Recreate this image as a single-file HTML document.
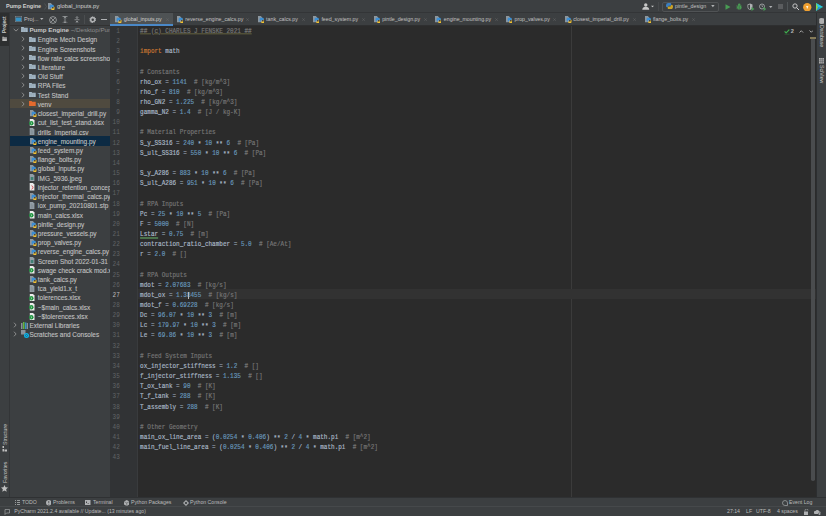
<!DOCTYPE html><html><head><meta charset="utf-8"><style>
*{margin:0;padding:0;box-sizing:border-box}
html,body{width:826px;height:516px;overflow:hidden;background:#3c3f41;font-family:"Liberation Sans",sans-serif;color:#bbbbbb}
.a{position:absolute}
.ic{position:absolute;display:block}
.t{position:absolute;white-space:pre;line-height:1}
.code{position:absolute;font-family:"Liberation Mono",monospace;font-size:6px;white-space:pre;color:#a9b7c6;transform:scaleY(1.2);-webkit-text-stroke:0.15px currentColor}
.ln{position:absolute;font-family:"Liberation Mono",monospace;font-size:6px;white-space:pre;color:#606366;text-align:right;transform:scaleY(1.2)}
.st{position:relative;top:0.9px} .k{color:#cc7832} .n{color:#6897bb} .c{color:#767676}
</style></head><body>
<div class="a" style="left:0;top:0;width:826px;height:13px;background:#3c3f41;border-bottom:0.8px solid #333537"></div>
<div class="t" style="left:6px;top:4.2px;font-size:5.5px;font-weight:bold;color:#d0d0d0">Pump Engine</div>
<svg class="ic" style="left:43.5px;top:3px" width="3" height="7" viewBox="0 0 3 7"><path d="M0.5 0.5L2.5 3.5 0.5 6.5" stroke="#5e6060" stroke-width="0.6" fill="none"/></svg>
<svg class="ic" style="left:48.3px;top:2.6px" width="6.5" height="7.2" viewBox="0 0 13 14.4"><path d="M0 0h5.5l2.7 2.7V12.4H0z" fill="#9aa7b0" opacity="0.85"/>
<path d="M6 3.6h3.6a2 2 0 0 1 2 2V8.2H7.6a2 2 0 0 0-2 2v.6H5a1.7 1.7 0 0 1-1.7-1.7V6A2.4 2.4 0 0 1 6 3.6z" fill="#3b8ed4"/>
<path d="M11.2 7h.2A1.6 1.6 0 0 1 13 8.6v3.4a2.4 2.4 0 0 1-2.4 2.4H8.6a2 2 0 0 1-2-2v-1.2h4a.6.6 0 0 0 .6-.6z" fill="#f2c230"/>
</svg>
<div class="t" style="left:57px;top:4px;font-size:5.85px;color:#d0d0d0">global_inputs.py</div>
<svg class="ic" style="left:641.6px;top:2.8px" width="12.5" height="7" viewBox="0 0 25 14">
<circle cx="7.5" cy="4" r="3.4" fill="#c8c8c8"/><path d="M0.5 13.5c0-4 3-6 7-6s7 2 7 6z" fill="#c8c8c8"/>
<path d="M18 5.5h6l-3 3z" fill="#c8c8c8"/></svg>
<div class="a" style="left:657.5px;top:2px;width:0.6px;height:9px;background:#46494b"></div>
<div class="a" style="left:662px;top:1.5px;width:57px;height:10px;border:0.8px solid #505355;border-radius:2px;background:#3c3f41"></div>
<svg class="ic" style="left:666px;top:3.2px" width="7" height="6.2" viewBox="0 0 14 12.4"><path d="M4.5 0h4a2 2 0 0 1 2 2v3.6H6a2 2 0 0 0-2 2v1H2.2A2.2 2.2 0 0 1 0 6.4V4.5A4.5 4.5 0 0 1 4.5 0z" fill="#3b7fc0"/><path d="M11.8 3.8A2.2 2.2 0 0 1 14 6v1.9a4.5 4.5 0 0 1-4.5 4.5h-4a2 2 0 0 1-2-2V6.8H8a2 2 0 0 0 2-2v-1z" fill="#c9a227"/></svg>
<div class="t" style="left:675px;top:4px;font-size:5.3px;color:#c2c2c2">pintle_design</div>
<svg class="ic" style="left:710.8px;top:5.4px" width="3.8" height="2.6" viewBox="0 0 4 3"><path d="M0 0h4L2 2.5z" fill="#afb1b3"/></svg>
<svg class="ic" style="left:724.5px;top:3.5px" width="6" height="6" viewBox="0 0 6 6"><path d="M0.5 0.2L5.5 3 0.5 5.8z" fill="#499c54"/></svg>
<svg class="ic" style="left:735.8px;top:2.8px" width="6.5" height="7" viewBox="0 0 13 14">
<ellipse cx="6.5" cy="8.5" rx="4.3" ry="5" fill="#499c54"/><ellipse cx="6.5" cy="3" rx="2.5" ry="2" fill="#499c54"/>
<path d="M0.5 6h2M10.5 6h2M0.5 10h2M10.5 10h2" stroke="#499c54" stroke-width="1.4"/><path d="M6.5 5v9" stroke="#3c3f41" stroke-width="0.8"/></svg>
<svg class="ic" style="left:747px;top:2.5px" width="7.5" height="8" viewBox="0 0 15 16">
<path d="M6 1l5 2v5c0 3-2.5 5-5 6-2.5-1-5-3-5-6V3z" fill="#afb1b3"/>
<path d="M6 3v10c-2-1-3.5-2.5-3.5-5V4z" fill="#3c3f41"/>
<path d="M9 8l6 4-6 4z" fill="#499c54"/></svg>
<svg class="ic" style="left:758.5px;top:2.5px" width="7.5" height="8" viewBox="0 0 15 16">
<circle cx="6" cy="7" r="5" fill="none" stroke="#afb1b3" stroke-width="1.6"/><path d="M6 4v3h2" stroke="#afb1b3" stroke-width="1.3" fill="none"/>
<path d="M9 8l6 4-6 4z" fill="#499c54"/></svg>
<svg class="ic" style="left:769.3px;top:5.5px" width="3.5" height="2.5" viewBox="0 0 4 3"><path d="M0 0h4L2 2.5z" fill="#afb1b3"/></svg>
<div class="a" style="left:777.5px;top:4px;width:5px;height:5px;background:#5b5d5f"></div>
<div class="a" style="left:787px;top:2px;width:0.6px;height:9px;background:#515658"></div>
<svg class="ic" style="left:791.5px;top:2.8px" width="7.5" height="7.5" viewBox="0 0 15 15">
<circle cx="6" cy="6" r="4.3" fill="none" stroke="#d0d0d0" stroke-width="1.8"/><path d="M9.2 9.2L14 14" stroke="#d0d0d0" stroke-width="2"/></svg>
<svg class="ic" style="left:803px;top:2.5px" width="8.5" height="8.5" viewBox="0 0 17 17">
<circle cx="8.5" cy="8.5" r="8.3" fill="#f0a030"/><path d="M6 6h5l-2.5 4z" fill="#fff6e0"/><rect x="7.5" y="6" width="2" height="5" fill="#fff6e0"/></svg>
<svg class="ic" style="left:815.6px;top:2.6px" width="7.2" height="8" viewBox="0 0 14.4 16">
<path d="M0 0l14.4 8L0 16z" fill="#22c3a0"/><path d="M0 0l14.4 8L4 9z" fill="#2bc2e8"/><path d="M0 6l9 4L0 16z" fill="#1f8adf"/><path d="M0 0L4 9 0 16z" fill="#8bd84a"/></svg>
<div class="a" style="left:0;top:13px;width:10px;height:484px;background:#3c3f41;border-right:0.9px solid #333537"></div>
<div class="a" style="left:0;top:13px;width:9.2px;height:32.8px;background:#2d2f30"></div>
<div class="t" style="left:2.5px;top:33.4px;font-size:4.9px;font-weight:bold;color:#d0d0d0;transform-origin:0 0;transform:rotate(-90deg)">Project</div>
<svg class="ic" style="left:2.2px;top:35.5px" width="5.2" height="5" viewBox="0 0 11 12"><path d="M0 2h4l1 1h6v9H0z" fill="#bdbdbd"/><path d="M0 5h11" stroke="#2d2f30" stroke-width="1"/></svg>
<div class="t" style="left:4.6px;top:423px;font-size:5.2px;color:#c4c4c4;transform-origin:0 0;transform:translate(-1.8px,22px) rotate(-90deg)">Structure</div>
<svg class="ic" style="left:2.3px;top:445.5px" width="5" height="6" viewBox="0 0 10 12"><rect x="1" y="0" width="3" height="4" fill="#c0c0c0"/><rect x="1" y="6" width="3" height="5" fill="#c0c0c0"/><rect x="5" y="7" width="5" height="4" fill="#c0c0c0"/></svg>
<div class="t" style="left:4.6px;top:462px;font-size:5.2px;color:#c4c4c4;transform-origin:0 0;transform:translate(-1.8px,21px) rotate(-90deg)">Favorites</div>
<svg class="ic" style="left:1.3px;top:485px" width="7" height="7" viewBox="0 0 14 14"><path d="M7 0l2.1 4.6 5 .5-3.8 3.3 1.1 5L7 10.8 2.6 13.4l1.1-5L-.1 5.1l5-.5z" fill="#c0c0c0"/></svg>
<div class="a" style="left:816.4px;top:13px;width:9.6px;height:484px;background:#3c3f41;border-left:1px solid #2c2e30"></div>
<svg class="ic" style="left:818.5px;top:17.5px" width="5.5" height="6" viewBox="0 0 11 12"><ellipse cx="5.5" cy="2" rx="5" ry="2" fill="#b0b0b0"/><rect x="0.5" y="2" width="10" height="8" fill="#b0b0b0"/><ellipse cx="5.5" cy="10" rx="5" ry="2" fill="#b0b0b0"/></svg>
<div class="t" style="left:821.3px;top:24.5px;font-size:5.2px;color:#c4c4c4;transform-origin:0 0;transform:translate(2.9px,0) rotate(90deg)">Database</div>
<svg class="ic" style="left:818.5px;top:58px" width="5.5" height="5.5" viewBox="0 0 11 11"><path d="M0 0h11v11H0z" fill="#b0b0b0"/><path d="M0 3.7h11M0 7.3h11M3.7 0v11M7.3 0v11" stroke="#3c3f41" stroke-width="0.8"/></svg>
<div class="t" style="left:821.3px;top:65px;font-size:5.2px;color:#c4c4c4;transform-origin:0 0;transform:translate(2.9px,0) rotate(90deg)">SciView</div>
<div class="a" style="left:10px;top:13px;width:100px;height:484px;background:#3c3f41;overflow:hidden">
<svg class="ic" style="left:5px;top:3px" width="7" height="6" viewBox="0 0 14 12"><rect x="0.5" y="0.5" width="13" height="11" fill="none" stroke="#8a9199" stroke-width="1"/><rect x="1.5" y="3" width="11" height="7.5" fill="#3592c4"/></svg>
<div class="t" style="left:14px;top:4px;font-size:5.6px;color:#c2c2c2">Proj...</div>
<svg class="ic" style="left:30.3px;top:5.2px" width="3.5" height="2.5" viewBox="0 0 4 3"><path d="M0 0h4L2 2.5z" fill="#afb1b3"/></svg>
<svg class="ic" style="left:38.8px;top:2.6px" width="8" height="8" viewBox="0 0 16 16"><circle cx="8" cy="8" r="6.8" fill="none" stroke="#afb1b3" stroke-width="1.5"/><path d="M3.3 3.3l9.4 9.4M12.7 3.3l-9.4 9.4" stroke="#afb1b3" stroke-width="1.4"/></svg>
<svg class="ic" style="left:51.5px;top:2.5px" width="6" height="7.5" viewBox="0 0 12 15"><path d="M1 1h10M1 14h10M6 1v13M3.5 4L6 1.8 8.5 4M3.5 11L6 13.2 8.5 11" stroke="#afb1b3" stroke-width="1.3" fill="none"/></svg>
<svg class="ic" style="left:63.5px;top:2.5px" width="6" height="7.5" viewBox="0 0 12 15"><path d="M1 7.5h10M6 0v5M6 10v5M3.5 2.5L6 5 8.5 2.5M3.5 12.5L6 10 8.5 12.5" stroke="#afb1b3" stroke-width="1.3" fill="none"/></svg>
<div class="a" style="left:74.3px;top:2px;width:0.6px;height:9px;background:#4a4d4f"></div>
<svg class="ic" style="left:78.5px;top:2.5px" width="7.5" height="7.5" viewBox="0 0 16 16"><path d="M8 0l1.6 2.2 2.6-.8.4 2.7 2.6 1-1.2 2.4 1.2 2.4-2.6 1-.4 2.7-2.6-.8L8 16l-1.6-2.2-2.6.8-.4-2.7-2.6-1 1.2-2.4L.8 5.1l2.6-1 .4-2.7 2.6.8z" fill="#afb1b3"/><circle cx="8" cy="8" r="2.6" fill="#3c3f41"/></svg>
<div class="a" style="left:91px;top:6px;width:6px;height:1px;background:#afb1b3"></div>
<div class="a" style="left:0;top:12.2px;width:100px;height:0.7px;background:#323232"></div>
<svg class="ic" style="left:3px;top:15.009999999999998px" width="6" height="4" viewBox="0 0 6 4"><path d="M0.7 0.9L3 3.1 5.3 0.9" stroke="#9a9a9a" stroke-width="0.85" fill="none"/></svg>
<svg class="ic" style="left:10.9px;top:14.409999999999998px" width="6.8" height="5" viewBox="0 0 16 12">
<path d="M0 0h6l1.5 2H16v10H0z" fill="#a5b8c7"/><path d="M0 4.5h16M5 4.5v7.5M10 4.5v7.5" stroke="#3c3f41" stroke-width="0.6" opacity="0.5"/>
</svg>
<div class="t" style="left:19.4px;top:13.71px;font-size:6.2px;font-weight:bold;color:#c8c8c8;margin-top:0.7px">Pump Engine <span style="font-weight:normal;color:#8c8c8c">~/Desktop/Pump Engine</span></div>
<svg class="ic" style="left:11.299999999999999px;top:23.229999999999997px" width="4" height="6" viewBox="0 0 4 6"><path d="M1 0.7L3.1 3 1 5.3" stroke="#9a9a9a" stroke-width="0.85" fill="none"/></svg>
<svg class="ic" style="left:19.4px;top:23.629999999999995px" width="6.8" height="5" viewBox="0 0 16 12">
<path d="M0 0h6l1.5 2H16v10H0z" fill="#a5b8c7"/><path d="M0 4.5h16M5 4.5v7.5M10 4.5v7.5" stroke="#3c3f41" stroke-width="0.6" opacity="0.5"/>
</svg>
<div class="t" style="left:27.8px;top:24.33px;font-size:6.45px;color:#c2c2c2;-webkit-text-stroke:0.1px #c2c2c2">Engine Mech Design</div>
<svg class="ic" style="left:11.299999999999999px;top:32.45px" width="4" height="6" viewBox="0 0 4 6"><path d="M1 0.7L3.1 3 1 5.3" stroke="#9a9a9a" stroke-width="0.85" fill="none"/></svg>
<svg class="ic" style="left:19.4px;top:32.85px" width="6.8" height="5" viewBox="0 0 16 12">
<path d="M0 0h6l1.5 2H16v10H0z" fill="#a5b8c7"/><path d="M0 4.5h16M5 4.5v7.5M10 4.5v7.5" stroke="#3c3f41" stroke-width="0.6" opacity="0.5"/>
</svg>
<div class="t" style="left:27.8px;top:33.55px;font-size:6.45px;color:#c2c2c2;-webkit-text-stroke:0.1px #c2c2c2">Engine Screenshots</div>
<svg class="ic" style="left:11.299999999999999px;top:41.67px" width="4" height="6" viewBox="0 0 4 6"><path d="M1 0.7L3.1 3 1 5.3" stroke="#9a9a9a" stroke-width="0.85" fill="none"/></svg>
<svg class="ic" style="left:19.4px;top:42.07px" width="6.8" height="5" viewBox="0 0 16 12">
<path d="M0 0h6l1.5 2H16v10H0z" fill="#a5b8c7"/><path d="M0 4.5h16M5 4.5v7.5M10 4.5v7.5" stroke="#3c3f41" stroke-width="0.6" opacity="0.5"/>
</svg>
<div class="t" style="left:27.8px;top:42.77px;font-size:6.45px;color:#c2c2c2;-webkit-text-stroke:0.1px #c2c2c2">flow rate calcs screenshots</div>
<svg class="ic" style="left:11.299999999999999px;top:50.89px" width="4" height="6" viewBox="0 0 4 6"><path d="M1 0.7L3.1 3 1 5.3" stroke="#9a9a9a" stroke-width="0.85" fill="none"/></svg>
<svg class="ic" style="left:19.4px;top:51.29px" width="6.8" height="5" viewBox="0 0 16 12">
<path d="M0 0h6l1.5 2H16v10H0z" fill="#a5b8c7"/><path d="M0 4.5h16M5 4.5v7.5M10 4.5v7.5" stroke="#3c3f41" stroke-width="0.6" opacity="0.5"/>
</svg>
<div class="t" style="left:27.8px;top:51.99px;font-size:6.45px;color:#c2c2c2;-webkit-text-stroke:0.1px #c2c2c2">Literature</div>
<svg class="ic" style="left:11.299999999999999px;top:60.11px" width="4" height="6" viewBox="0 0 4 6"><path d="M1 0.7L3.1 3 1 5.3" stroke="#9a9a9a" stroke-width="0.85" fill="none"/></svg>
<svg class="ic" style="left:19.4px;top:60.51px" width="6.8" height="5" viewBox="0 0 16 12">
<path d="M0 0h6l1.5 2H16v10H0z" fill="#a5b8c7"/><path d="M0 4.5h16M5 4.5v7.5M10 4.5v7.5" stroke="#3c3f41" stroke-width="0.6" opacity="0.5"/>
</svg>
<div class="t" style="left:27.8px;top:61.21px;font-size:6.45px;color:#c2c2c2;-webkit-text-stroke:0.1px #c2c2c2">Old Stuff</div>
<svg class="ic" style="left:11.299999999999999px;top:69.33px" width="4" height="6" viewBox="0 0 4 6"><path d="M1 0.7L3.1 3 1 5.3" stroke="#9a9a9a" stroke-width="0.85" fill="none"/></svg>
<svg class="ic" style="left:19.4px;top:69.73px" width="6.8" height="5" viewBox="0 0 16 12">
<path d="M0 0h6l1.5 2H16v10H0z" fill="#a5b8c7"/><path d="M0 4.5h16M5 4.5v7.5M10 4.5v7.5" stroke="#3c3f41" stroke-width="0.6" opacity="0.5"/>
</svg>
<div class="t" style="left:27.8px;top:70.43px;font-size:6.45px;color:#c2c2c2;-webkit-text-stroke:0.1px #c2c2c2">RPA Files</div>
<svg class="ic" style="left:11.299999999999999px;top:78.55px" width="4" height="6" viewBox="0 0 4 6"><path d="M1 0.7L3.1 3 1 5.3" stroke="#9a9a9a" stroke-width="0.85" fill="none"/></svg>
<svg class="ic" style="left:19.4px;top:78.95px" width="6.8" height="5" viewBox="0 0 16 12">
<path d="M0 0h6l1.5 2H16v10H0z" fill="#a5b8c7"/><path d="M0 4.5h16M5 4.5v7.5M10 4.5v7.5" stroke="#3c3f41" stroke-width="0.6" opacity="0.5"/>
</svg>
<div class="t" style="left:27.8px;top:79.65px;font-size:6.45px;color:#c2c2c2;-webkit-text-stroke:0.1px #c2c2c2">Test Stand</div>
<div class="a" style="left:0;top:86.16px;width:100px;height:9.22px;background:#4f4a3f"></div>
<svg class="ic" style="left:11.299999999999999px;top:87.77px" width="4" height="6" viewBox="0 0 4 6"><path d="M1 0.7L3.1 3 1 5.3" stroke="#9a9a9a" stroke-width="0.85" fill="none"/></svg>
<svg class="ic" style="left:19.4px;top:88.17px" width="6.8" height="5" viewBox="0 0 16 12">
<path d="M0 0h6l1.5 2H16v10H0z" fill="#e36a2e"/><path d="M0 4.5h16M5 4.5v7.5M10 4.5v7.5" stroke="#3c3f41" stroke-width="0.6" opacity="0"/>
</svg>
<div class="t" style="left:27.8px;top:88.87px;font-size:6.45px;color:#c2c2c2;-webkit-text-stroke:0.1px #c2c2c2">venv</div>
<svg class="ic" style="left:20.2px;top:96.89px" width="6.5" height="7.2" viewBox="0 0 13 14.4"><path d="M0 0h5.5l2.7 2.7V12.4H0z" fill="#9aa7b0" opacity="0.85"/>
<path d="M6 3.6h3.6a2 2 0 0 1 2 2V8.2H7.6a2 2 0 0 0-2 2v.6H5a1.7 1.7 0 0 1-1.7-1.7V6A2.4 2.4 0 0 1 6 3.6z" fill="#3b8ed4"/>
<path d="M11.2 7h.2A1.6 1.6 0 0 1 13 8.6v3.4a2.4 2.4 0 0 1-2.4 2.4H8.6a2 2 0 0 1-2-2v-1.2h4a.6.6 0 0 0 .6-.6z" fill="#f2c230"/>
</svg>
<div class="t" style="left:27.8px;top:98.09px;font-size:6.45px;color:#c2c2c2;-webkit-text-stroke:0.1px #c2c2c2">closest_imperial_drill.py</div>
<svg class="ic" style="left:18.8px;top:105.91px" width="6" height="7.4" viewBox="0 0 12 14.8">
<path d="M1.6 0h6.4l3 3V14.8H1.6z" fill="#ececec"/>
<circle cx="4.6" cy="8.6" r="4.4" fill="#1f9440"/>
<path d="M3.4 6.6l2.6 2-2.6 2" stroke="#e8f5e8" stroke-width="1" fill="none"/>
</svg>
<div class="t" style="left:27.8px;top:107.31px;font-size:6.45px;color:#c2c2c2;-webkit-text-stroke:0.1px #c2c2c2">cut_list_test_stand.xlsx</div>
<svg class="ic" style="left:19.4px;top:114.83px" width="6" height="7.4" viewBox="0 0 12 14.8">
<path d="M1.4 0h6.4l3 3V14.8H1.4z" fill="#a3b0ba" opacity="0.85"/>
<path d="M4.6 3v10M7.6 5v8" stroke="#6e7a82" stroke-width="0.8"/>
</svg>
<div class="t" style="left:27.8px;top:116.53px;font-size:6.45px;color:#c2c2c2;-webkit-text-stroke:0.1px #c2c2c2">drills_imperial.csv</div>
<div class="a" style="left:0;top:122.94px;width:100px;height:9.8px;background:#0c2a43"></div>
<svg class="ic" style="left:20.2px;top:124.55000000000003px" width="6.5" height="7.2" viewBox="0 0 13 14.4"><path d="M0 0h5.5l2.7 2.7V12.4H0z" fill="#9aa7b0" opacity="0.85"/>
<path d="M6 3.6h3.6a2 2 0 0 1 2 2V8.2H7.6a2 2 0 0 0-2 2v.6H5a1.7 1.7 0 0 1-1.7-1.7V6A2.4 2.4 0 0 1 6 3.6z" fill="#3b8ed4"/>
<path d="M11.2 7h.2A1.6 1.6 0 0 1 13 8.6v3.4a2.4 2.4 0 0 1-2.4 2.4H8.6a2 2 0 0 1-2-2v-1.2h4a.6.6 0 0 0 .6-.6z" fill="#f2c230"/>
</svg>
<div class="t" style="left:27.8px;top:125.75px;font-size:6.45px;color:#c2c2c2;-webkit-text-stroke:0.1px #c2c2c2">engine_mounting.py</div>
<svg class="ic" style="left:20.2px;top:133.77000000000004px" width="6.5" height="7.2" viewBox="0 0 13 14.4"><path d="M0 0h5.5l2.7 2.7V12.4H0z" fill="#9aa7b0" opacity="0.85"/>
<path d="M6 3.6h3.6a2 2 0 0 1 2 2V8.2H7.6a2 2 0 0 0-2 2v.6H5a1.7 1.7 0 0 1-1.7-1.7V6A2.4 2.4 0 0 1 6 3.6z" fill="#3b8ed4"/>
<path d="M11.2 7h.2A1.6 1.6 0 0 1 13 8.6v3.4a2.4 2.4 0 0 1-2.4 2.4H8.6a2 2 0 0 1-2-2v-1.2h4a.6.6 0 0 0 .6-.6z" fill="#f2c230"/>
</svg>
<div class="t" style="left:27.8px;top:134.97px;font-size:6.45px;color:#c2c2c2;-webkit-text-stroke:0.1px #c2c2c2">feed_system.py</div>
<svg class="ic" style="left:20.2px;top:142.99000000000004px" width="6.5" height="7.2" viewBox="0 0 13 14.4"><path d="M0 0h5.5l2.7 2.7V12.4H0z" fill="#9aa7b0" opacity="0.85"/>
<path d="M6 3.6h3.6a2 2 0 0 1 2 2V8.2H7.6a2 2 0 0 0-2 2v.6H5a1.7 1.7 0 0 1-1.7-1.7V6A2.4 2.4 0 0 1 6 3.6z" fill="#3b8ed4"/>
<path d="M11.2 7h.2A1.6 1.6 0 0 1 13 8.6v3.4a2.4 2.4 0 0 1-2.4 2.4H8.6a2 2 0 0 1-2-2v-1.2h4a.6.6 0 0 0 .6-.6z" fill="#f2c230"/>
</svg>
<div class="t" style="left:27.8px;top:144.19px;font-size:6.45px;color:#c2c2c2;-webkit-text-stroke:0.1px #c2c2c2">flange_bolts.py</div>
<svg class="ic" style="left:20.2px;top:152.21000000000004px" width="6.5" height="7.2" viewBox="0 0 13 14.4"><path d="M0 0h5.5l2.7 2.7V12.4H0z" fill="#9aa7b0" opacity="0.85"/>
<path d="M6 3.6h3.6a2 2 0 0 1 2 2V8.2H7.6a2 2 0 0 0-2 2v.6H5a1.7 1.7 0 0 1-1.7-1.7V6A2.4 2.4 0 0 1 6 3.6z" fill="#3b8ed4"/>
<path d="M11.2 7h.2A1.6 1.6 0 0 1 13 8.6v3.4a2.4 2.4 0 0 1-2.4 2.4H8.6a2 2 0 0 1-2-2v-1.2h4a.6.6 0 0 0 .6-.6z" fill="#f2c230"/>
</svg>
<div class="t" style="left:27.8px;top:153.41px;font-size:6.45px;color:#c2c2c2;-webkit-text-stroke:0.1px #c2c2c2">global_inputs.py</div>
<svg class="ic" style="left:19.4px;top:160.93000000000004px" width="6" height="7.4" viewBox="0 0 12 14.8">
<path d="M1.4 0h6.4l3 3V14.8H1.4z" fill="#a3b0ba" opacity="0.85"/>
<rect x="3.4" y="6" width="5.4" height="6" fill="#3f7f74"/>
</svg>
<div class="t" style="left:27.8px;top:162.63px;font-size:6.45px;color:#c2c2c2;-webkit-text-stroke:0.1px #c2c2c2">IMG_5936.jpeg</div>
<svg class="ic" style="left:19.4px;top:170.15000000000003px" width="6" height="7.4" viewBox="0 0 12 14.8">
<path d="M1.4 0h6.4l3 3V14.8H1.4z" fill="#ececec"/>
<path d="M5 5.5c2 .5 3 2 3 3.5s-1 3-3 3.5" stroke="#d0454f" stroke-width="2" fill="none"/>
</svg>
<div class="t" style="left:27.8px;top:171.85px;font-size:6.45px;color:#c2c2c2;-webkit-text-stroke:0.1px #c2c2c2">injector_retention_concept.pdf</div>
<svg class="ic" style="left:20.2px;top:179.87000000000003px" width="6.5" height="7.2" viewBox="0 0 13 14.4"><path d="M0 0h5.5l2.7 2.7V12.4H0z" fill="#9aa7b0" opacity="0.85"/>
<path d="M6 3.6h3.6a2 2 0 0 1 2 2V8.2H7.6a2 2 0 0 0-2 2v.6H5a1.7 1.7 0 0 1-1.7-1.7V6A2.4 2.4 0 0 1 6 3.6z" fill="#3b8ed4"/>
<path d="M11.2 7h.2A1.6 1.6 0 0 1 13 8.6v3.4a2.4 2.4 0 0 1-2.4 2.4H8.6a2 2 0 0 1-2-2v-1.2h4a.6.6 0 0 0 .6-.6z" fill="#f2c230"/>
</svg>
<div class="t" style="left:27.8px;top:181.07px;font-size:6.45px;color:#c2c2c2;-webkit-text-stroke:0.1px #c2c2c2">injector_thermal_calcs.py</div>
<svg class="ic" style="left:19.4px;top:188.59000000000003px" width="6" height="7.4" viewBox="0 0 12 14.8">
<path d="M1.4 0h6.4l3 3V14.8H1.4z" fill="#a3b0ba" opacity="0.85"/>
<path d="M4.6 3v10M7.6 5v8" stroke="#6e7a82" stroke-width="0.8"/>
</svg>
<div class="t" style="left:27.8px;top:190.29px;font-size:6.45px;color:#c2c2c2;-webkit-text-stroke:0.1px #c2c2c2">lox_pump_20210801.stp</div>
<svg class="ic" style="left:18.8px;top:198.11px" width="6" height="7.4" viewBox="0 0 12 14.8">
<path d="M1.6 0h6.4l3 3V14.8H1.6z" fill="#ececec"/>
<circle cx="4.6" cy="8.6" r="4.4" fill="#1f9440"/>
<path d="M3.4 6.6l2.6 2-2.6 2" stroke="#e8f5e8" stroke-width="1" fill="none"/>
</svg>
<div class="t" style="left:27.8px;top:199.51px;font-size:6.45px;color:#c2c2c2;-webkit-text-stroke:0.1px #c2c2c2">main_calcs.xlsx</div>
<svg class="ic" style="left:20.2px;top:207.53000000000003px" width="6.5" height="7.2" viewBox="0 0 13 14.4"><path d="M0 0h5.5l2.7 2.7V12.4H0z" fill="#9aa7b0" opacity="0.85"/>
<path d="M6 3.6h3.6a2 2 0 0 1 2 2V8.2H7.6a2 2 0 0 0-2 2v.6H5a1.7 1.7 0 0 1-1.7-1.7V6A2.4 2.4 0 0 1 6 3.6z" fill="#3b8ed4"/>
<path d="M11.2 7h.2A1.6 1.6 0 0 1 13 8.6v3.4a2.4 2.4 0 0 1-2.4 2.4H8.6a2 2 0 0 1-2-2v-1.2h4a.6.6 0 0 0 .6-.6z" fill="#f2c230"/>
</svg>
<div class="t" style="left:27.8px;top:208.73px;font-size:6.45px;color:#c2c2c2;-webkit-text-stroke:0.1px #c2c2c2">pintle_design.py</div>
<svg class="ic" style="left:20.2px;top:216.75000000000003px" width="6.5" height="7.2" viewBox="0 0 13 14.4"><path d="M0 0h5.5l2.7 2.7V12.4H0z" fill="#9aa7b0" opacity="0.85"/>
<path d="M6 3.6h3.6a2 2 0 0 1 2 2V8.2H7.6a2 2 0 0 0-2 2v.6H5a1.7 1.7 0 0 1-1.7-1.7V6A2.4 2.4 0 0 1 6 3.6z" fill="#3b8ed4"/>
<path d="M11.2 7h.2A1.6 1.6 0 0 1 13 8.6v3.4a2.4 2.4 0 0 1-2.4 2.4H8.6a2 2 0 0 1-2-2v-1.2h4a.6.6 0 0 0 .6-.6z" fill="#f2c230"/>
</svg>
<div class="t" style="left:27.8px;top:217.95px;font-size:6.45px;color:#c2c2c2;-webkit-text-stroke:0.1px #c2c2c2">pressure_vessels.py</div>
<svg class="ic" style="left:20.2px;top:225.97000000000003px" width="6.5" height="7.2" viewBox="0 0 13 14.4"><path d="M0 0h5.5l2.7 2.7V12.4H0z" fill="#9aa7b0" opacity="0.85"/>
<path d="M6 3.6h3.6a2 2 0 0 1 2 2V8.2H7.6a2 2 0 0 0-2 2v.6H5a1.7 1.7 0 0 1-1.7-1.7V6A2.4 2.4 0 0 1 6 3.6z" fill="#3b8ed4"/>
<path d="M11.2 7h.2A1.6 1.6 0 0 1 13 8.6v3.4a2.4 2.4 0 0 1-2.4 2.4H8.6a2 2 0 0 1-2-2v-1.2h4a.6.6 0 0 0 .6-.6z" fill="#f2c230"/>
</svg>
<div class="t" style="left:27.8px;top:227.17px;font-size:6.45px;color:#c2c2c2;-webkit-text-stroke:0.1px #c2c2c2">prop_valves.py</div>
<svg class="ic" style="left:20.2px;top:235.19000000000005px" width="6.5" height="7.2" viewBox="0 0 13 14.4"><path d="M0 0h5.5l2.7 2.7V12.4H0z" fill="#9aa7b0" opacity="0.85"/>
<path d="M6 3.6h3.6a2 2 0 0 1 2 2V8.2H7.6a2 2 0 0 0-2 2v.6H5a1.7 1.7 0 0 1-1.7-1.7V6A2.4 2.4 0 0 1 6 3.6z" fill="#3b8ed4"/>
<path d="M11.2 7h.2A1.6 1.6 0 0 1 13 8.6v3.4a2.4 2.4 0 0 1-2.4 2.4H8.6a2 2 0 0 1-2-2v-1.2h4a.6.6 0 0 0 .6-.6z" fill="#f2c230"/>
</svg>
<div class="t" style="left:27.8px;top:236.39px;font-size:6.45px;color:#c2c2c2;-webkit-text-stroke:0.1px #c2c2c2">reverse_engine_calcs.py</div>
<svg class="ic" style="left:19.4px;top:243.91000000000005px" width="6" height="7.4" viewBox="0 0 12 14.8">
<path d="M1.4 0h6.4l3 3V14.8H1.4z" fill="#a3b0ba" opacity="0.85"/>
<rect x="3.4" y="6" width="5.4" height="6" fill="#3f7f74"/>
</svg>
<div class="t" style="left:27.8px;top:245.61px;font-size:6.45px;color:#c2c2c2;-webkit-text-stroke:0.1px #c2c2c2">Screen Shot 2022-01-31</div>
<svg class="ic" style="left:18.8px;top:253.43px" width="6" height="7.4" viewBox="0 0 12 14.8">
<path d="M1.6 0h6.4l3 3V14.8H1.6z" fill="#ececec"/>
<circle cx="4.6" cy="8.6" r="4.4" fill="#1f9440"/>
<path d="M3.4 6.6l2.6 2-2.6 2" stroke="#e8f5e8" stroke-width="1" fill="none"/>
</svg>
<div class="t" style="left:27.8px;top:254.83px;font-size:6.45px;color:#c2c2c2;-webkit-text-stroke:0.1px #c2c2c2">swage check crack mod.xlsx</div>
<svg class="ic" style="left:20.2px;top:262.85px" width="6.5" height="7.2" viewBox="0 0 13 14.4"><path d="M0 0h5.5l2.7 2.7V12.4H0z" fill="#9aa7b0" opacity="0.85"/>
<path d="M6 3.6h3.6a2 2 0 0 1 2 2V8.2H7.6a2 2 0 0 0-2 2v.6H5a1.7 1.7 0 0 1-1.7-1.7V6A2.4 2.4 0 0 1 6 3.6z" fill="#3b8ed4"/>
<path d="M11.2 7h.2A1.6 1.6 0 0 1 13 8.6v3.4a2.4 2.4 0 0 1-2.4 2.4H8.6a2 2 0 0 1-2-2v-1.2h4a.6.6 0 0 0 .6-.6z" fill="#f2c230"/>
</svg>
<div class="t" style="left:27.8px;top:264.05px;font-size:6.45px;color:#c2c2c2;-webkit-text-stroke:0.1px #c2c2c2">tank_calcs.py</div>
<svg class="ic" style="left:19.4px;top:271.57px" width="6" height="7.4" viewBox="0 0 12 14.8">
<path d="M1.4 0h6.4l3 3V14.8H1.4z" fill="#a3b0ba" opacity="0.85"/>
<path d="M4.6 3v10M7.6 5v8" stroke="#6e7a82" stroke-width="0.8"/>
</svg>
<div class="t" style="left:27.8px;top:273.27px;font-size:6.45px;color:#c2c2c2;-webkit-text-stroke:0.1px #c2c2c2">tca_yield1.x_t</div>
<svg class="ic" style="left:18.8px;top:281.09px" width="6" height="7.4" viewBox="0 0 12 14.8">
<path d="M1.6 0h6.4l3 3V14.8H1.6z" fill="#ececec"/>
<circle cx="4.6" cy="8.6" r="4.4" fill="#1f9440"/>
<path d="M3.4 6.6l2.6 2-2.6 2" stroke="#e8f5e8" stroke-width="1" fill="none"/>
</svg>
<div class="t" style="left:27.8px;top:282.49px;font-size:6.45px;color:#c2c2c2;-webkit-text-stroke:0.1px #c2c2c2">tolerences.xlsx</div>
<svg class="ic" style="left:18.8px;top:290.31px" width="6" height="7.4" viewBox="0 0 12 14.8">
<path d="M1.6 0h6.4l3 3V14.8H1.6z" fill="#ececec"/>
<circle cx="4.6" cy="8.6" r="4.4" fill="#1f9440"/>
<path d="M3.4 6.6l2.6 2-2.6 2" stroke="#e8f5e8" stroke-width="1" fill="none"/>
</svg>
<div class="t" style="left:27.8px;top:291.71px;font-size:6.45px;color:#c2c2c2;-webkit-text-stroke:0.1px #c2c2c2">~$main_calcs.xlsx</div>
<svg class="ic" style="left:18.8px;top:299.53px" width="6" height="7.4" viewBox="0 0 12 14.8">
<path d="M1.6 0h6.4l3 3V14.8H1.6z" fill="#ececec"/>
<circle cx="4.6" cy="8.6" r="4.4" fill="#1f9440"/>
<path d="M3.4 6.6l2.6 2-2.6 2" stroke="#e8f5e8" stroke-width="1" fill="none"/>
</svg>
<div class="t" style="left:27.8px;top:300.93px;font-size:6.45px;color:#c2c2c2;-webkit-text-stroke:0.1px #c2c2c2">~$tolerences.xlsx</div>
<svg class="ic" style="left:2.6px;top:309.05px" width="4" height="6" viewBox="0 0 4 6"><path d="M1 0.7L3.1 3 1 5.3" stroke="#9a9a9a" stroke-width="0.85" fill="none"/></svg>
<svg class="ic" style="left:11px;top:308.55px" width="7" height="7" viewBox="0 0 14 14"><rect x="0" y="2" width="3" height="12" fill="#8a9199"/><rect x="4" y="0" width="3" height="14" fill="#62b543"/><rect x="8" y="1" width="3" height="13" fill="#3592c4"/><rect x="11.5" y="2" width="2.5" height="12" fill="#8a9199"/></svg>
<div class="t" style="left:19.4px;top:310.15px;font-size:6.45px;color:#c2c2c2;-webkit-text-stroke:0.1px #c2c2c2">External Libraries</div>
<svg class="ic" style="left:2.6px;top:318.27000000000004px" width="4" height="6" viewBox="0 0 4 6"><path d="M1 0.7L3.1 3 1 5.3" stroke="#9a9a9a" stroke-width="0.85" fill="none"/></svg>
<svg class="ic" style="left:11px;top:317.27000000000004px" width="8" height="8" viewBox="0 0 16 16"><rect x="0" y="0" width="9" height="9" fill="#8a9199"/><circle cx="11" cy="11" r="5" fill="#0db5e8"/><circle cx="11" cy="11" r="2" fill="none" stroke="#1f4f70" stroke-width="1.2"/></svg>
<div class="t" style="left:19.4px;top:319.37px;font-size:6.45px;color:#c2c2c2;-webkit-text-stroke:0.1px #c2c2c2">Scratches and Consoles</div>
</div>
<div class="a" style="left:110px;top:13px;width:706px;height:13px;background:#3c3f41"></div>
<div class="a" style="left:110.2px;top:13px;width:62.7px;height:13px;background:#4e5254"></div>
<div class="a" style="left:110px;top:25.1px;width:706px;height:1px;background:#2e2f30"></div>
<div class="a" style="left:110.2px;top:23.9px;width:62.9px;height:1.9px;background:#4a88c7"></div>
<svg class="ic" style="left:115.0px;top:15.8px" width="6.5" height="7.2" viewBox="0 0 13 14.4"><path d="M0 0h5.5l2.7 2.7V12.4H0z" fill="#9aa7b0" opacity="0.85"/>
<path d="M6 3.6h3.6a2 2 0 0 1 2 2V8.2H7.6a2 2 0 0 0-2 2v.6H5a1.7 1.7 0 0 1-1.7-1.7V6A2.4 2.4 0 0 1 6 3.6z" fill="#3b8ed4"/>
<path d="M11.2 7h.2A1.6 1.6 0 0 1 13 8.6v3.4a2.4 2.4 0 0 1-2.4 2.4H8.6a2 2 0 0 1-2-2v-1.2h4a.6.6 0 0 0 .6-.6z" fill="#f2c230"/>
</svg>
<div class="t" style="left:123.7px;top:16.6px;font-size:5.25px;color:#d2d2d2">global_inputs.py</div>
<svg class="ic" style="left:165.9px;top:17.6px" width="3.2" height="3.2" viewBox="0 0 4 4"><path d="M0.3 0.3L3.7 3.7M3.7 0.3L0.3 3.7" stroke="#6e6e6e" stroke-width="0.5"/></svg>
<svg class="ic" style="left:176.79999999999998px;top:15.8px" width="6.5" height="7.2" viewBox="0 0 13 14.4"><path d="M0 0h5.5l2.7 2.7V12.4H0z" fill="#9aa7b0" opacity="0.85"/>
<path d="M6 3.6h3.6a2 2 0 0 1 2 2V8.2H7.6a2 2 0 0 0-2 2v.6H5a1.7 1.7 0 0 1-1.7-1.7V6A2.4 2.4 0 0 1 6 3.6z" fill="#3b8ed4"/>
<path d="M11.2 7h.2A1.6 1.6 0 0 1 13 8.6v3.4a2.4 2.4 0 0 1-2.4 2.4H8.6a2 2 0 0 1-2-2v-1.2h4a.6.6 0 0 0 .6-.6z" fill="#f2c230"/>
</svg>
<div class="t" style="left:185.3px;top:16.6px;font-size:5.25px;color:#c2c2c2">reverse_engine_calcs.py</div>
<svg class="ic" style="left:246.0px;top:17.6px" width="3.2" height="3.2" viewBox="0 0 4 4"><path d="M0.3 0.3L3.7 3.7M3.7 0.3L0.3 3.7" stroke="#6e6e6e" stroke-width="0.5"/></svg>
<svg class="ic" style="left:257.5px;top:15.8px" width="6.5" height="7.2" viewBox="0 0 13 14.4"><path d="M0 0h5.5l2.7 2.7V12.4H0z" fill="#9aa7b0" opacity="0.85"/>
<path d="M6 3.6h3.6a2 2 0 0 1 2 2V8.2H7.6a2 2 0 0 0-2 2v.6H5a1.7 1.7 0 0 1-1.7-1.7V6A2.4 2.4 0 0 1 6 3.6z" fill="#3b8ed4"/>
<path d="M11.2 7h.2A1.6 1.6 0 0 1 13 8.6v3.4a2.4 2.4 0 0 1-2.4 2.4H8.6a2 2 0 0 1-2-2v-1.2h4a.6.6 0 0 0 .6-.6z" fill="#f2c230"/>
</svg>
<div class="t" style="left:266.1px;top:16.6px;font-size:5.25px;color:#c2c2c2">tank_calcs.py</div>
<svg class="ic" style="left:301.9px;top:17.6px" width="3.2" height="3.2" viewBox="0 0 4 4"><path d="M0.3 0.3L3.7 3.7M3.7 0.3L0.3 3.7" stroke="#6e6e6e" stroke-width="0.5"/></svg>
<svg class="ic" style="left:312.7px;top:15.8px" width="6.5" height="7.2" viewBox="0 0 13 14.4"><path d="M0 0h5.5l2.7 2.7V12.4H0z" fill="#9aa7b0" opacity="0.85"/>
<path d="M6 3.6h3.6a2 2 0 0 1 2 2V8.2H7.6a2 2 0 0 0-2 2v.6H5a1.7 1.7 0 0 1-1.7-1.7V6A2.4 2.4 0 0 1 6 3.6z" fill="#3b8ed4"/>
<path d="M11.2 7h.2A1.6 1.6 0 0 1 13 8.6v3.4a2.4 2.4 0 0 1-2.4 2.4H8.6a2 2 0 0 1-2-2v-1.2h4a.6.6 0 0 0 .6-.6z" fill="#f2c230"/>
</svg>
<div class="t" style="left:321.4px;top:16.6px;font-size:5.25px;color:#c2c2c2">feed_system.py</div>
<svg class="ic" style="left:362.4px;top:17.6px" width="3.2" height="3.2" viewBox="0 0 4 4"><path d="M0.3 0.3L3.7 3.7M3.7 0.3L0.3 3.7" stroke="#6e6e6e" stroke-width="0.5"/></svg>
<svg class="ic" style="left:373.5px;top:15.8px" width="6.5" height="7.2" viewBox="0 0 13 14.4"><path d="M0 0h5.5l2.7 2.7V12.4H0z" fill="#9aa7b0" opacity="0.85"/>
<path d="M6 3.6h3.6a2 2 0 0 1 2 2V8.2H7.6a2 2 0 0 0-2 2v.6H5a1.7 1.7 0 0 1-1.7-1.7V6A2.4 2.4 0 0 1 6 3.6z" fill="#3b8ed4"/>
<path d="M11.2 7h.2A1.6 1.6 0 0 1 13 8.6v3.4a2.4 2.4 0 0 1-2.4 2.4H8.6a2 2 0 0 1-2-2v-1.2h4a.6.6 0 0 0 .6-.6z" fill="#f2c230"/>
</svg>
<div class="t" style="left:382.2px;top:16.6px;font-size:5.25px;color:#c2c2c2">pintle_design.py</div>
<svg class="ic" style="left:423.9px;top:17.6px" width="3.2" height="3.2" viewBox="0 0 4 4"><path d="M0.3 0.3L3.7 3.7M3.7 0.3L0.3 3.7" stroke="#6e6e6e" stroke-width="0.5"/></svg>
<svg class="ic" style="left:434.59999999999997px;top:15.8px" width="6.5" height="7.2" viewBox="0 0 13 14.4"><path d="M0 0h5.5l2.7 2.7V12.4H0z" fill="#9aa7b0" opacity="0.85"/>
<path d="M6 3.6h3.6a2 2 0 0 1 2 2V8.2H7.6a2 2 0 0 0-2 2v.6H5a1.7 1.7 0 0 1-1.7-1.7V6A2.4 2.4 0 0 1 6 3.6z" fill="#3b8ed4"/>
<path d="M11.2 7h.2A1.6 1.6 0 0 1 13 8.6v3.4a2.4 2.4 0 0 1-2.4 2.4H8.6a2 2 0 0 1-2-2v-1.2h4a.6.6 0 0 0 .6-.6z" fill="#f2c230"/>
</svg>
<div class="t" style="left:443.8px;top:16.6px;font-size:5.25px;color:#c2c2c2">engine_mounting.py</div>
<svg class="ic" style="left:495.4px;top:17.6px" width="3.2" height="3.2" viewBox="0 0 4 4"><path d="M0.3 0.3L3.7 3.7M3.7 0.3L0.3 3.7" stroke="#6e6e6e" stroke-width="0.5"/></svg>
<svg class="ic" style="left:505.7px;top:15.8px" width="6.5" height="7.2" viewBox="0 0 13 14.4"><path d="M0 0h5.5l2.7 2.7V12.4H0z" fill="#9aa7b0" opacity="0.85"/>
<path d="M6 3.6h3.6a2 2 0 0 1 2 2V8.2H7.6a2 2 0 0 0-2 2v.6H5a1.7 1.7 0 0 1-1.7-1.7V6A2.4 2.4 0 0 1 6 3.6z" fill="#3b8ed4"/>
<path d="M11.2 7h.2A1.6 1.6 0 0 1 13 8.6v3.4a2.4 2.4 0 0 1-2.4 2.4H8.6a2 2 0 0 1-2-2v-1.2h4a.6.6 0 0 0 .6-.6z" fill="#f2c230"/>
</svg>
<div class="t" style="left:514.5px;top:16.6px;font-size:5.25px;color:#c2c2c2">prop_valves.py</div>
<svg class="ic" style="left:552.9px;top:17.6px" width="3.2" height="3.2" viewBox="0 0 4 4"><path d="M0.3 0.3L3.7 3.7M3.7 0.3L0.3 3.7" stroke="#6e6e6e" stroke-width="0.5"/></svg>
<svg class="ic" style="left:565.3000000000001px;top:15.8px" width="6.5" height="7.2" viewBox="0 0 13 14.4"><path d="M0 0h5.5l2.7 2.7V12.4H0z" fill="#9aa7b0" opacity="0.85"/>
<path d="M6 3.6h3.6a2 2 0 0 1 2 2V8.2H7.6a2 2 0 0 0-2 2v.6H5a1.7 1.7 0 0 1-1.7-1.7V6A2.4 2.4 0 0 1 6 3.6z" fill="#3b8ed4"/>
<path d="M11.2 7h.2A1.6 1.6 0 0 1 13 8.6v3.4a2.4 2.4 0 0 1-2.4 2.4H8.6a2 2 0 0 1-2-2v-1.2h4a.6.6 0 0 0 .6-.6z" fill="#f2c230"/>
</svg>
<div class="t" style="left:573.2px;top:16.6px;font-size:5.25px;color:#c2c2c2">closest_imperial_drill.py</div>
<svg class="ic" style="left:632.9px;top:17.6px" width="3.2" height="3.2" viewBox="0 0 4 4"><path d="M0.3 0.3L3.7 3.7M3.7 0.3L0.3 3.7" stroke="#6e6e6e" stroke-width="0.5"/></svg>
<svg class="ic" style="left:644.9000000000001px;top:15.8px" width="6.5" height="7.2" viewBox="0 0 13 14.4"><path d="M0 0h5.5l2.7 2.7V12.4H0z" fill="#9aa7b0" opacity="0.85"/>
<path d="M6 3.6h3.6a2 2 0 0 1 2 2V8.2H7.6a2 2 0 0 0-2 2v.6H5a1.7 1.7 0 0 1-1.7-1.7V6A2.4 2.4 0 0 1 6 3.6z" fill="#3b8ed4"/>
<path d="M11.2 7h.2A1.6 1.6 0 0 1 13 8.6v3.4a2.4 2.4 0 0 1-2.4 2.4H8.6a2 2 0 0 1-2-2v-1.2h4a.6.6 0 0 0 .6-.6z" fill="#f2c230"/>
</svg>
<div class="t" style="left:652.9px;top:16.6px;font-size:5.25px;color:#c2c2c2">flange_bolts.py</div>
<svg class="ic" style="left:692.4px;top:17.6px" width="3.2" height="3.2" viewBox="0 0 4 4"><path d="M0.3 0.3L3.7 3.7M3.7 0.3L0.3 3.7" stroke="#6e6e6e" stroke-width="0.5"/></svg>
<div class="a" style="left:110px;top:26px;width:706px;height:471px;background:#2b2b2b"></div>
<div class="a" style="left:110px;top:26px;width:27.5px;height:471px;background:#313335"></div>
<div class="a" style="left:137.4px;top:26px;width:0.8px;height:471px;background:#393b3d"></div>
<div class="a" style="left:571.2px;top:26px;width:0.6px;height:471px;background:#3b3b3b"></div>
<div class="a" style="left:138.2px;top:289.05px;width:677.8px;height:10.25px;background:#323232"></div>
<div class="ln" style="left:110px;width:9.8px;top:26.95px;height:10.15px;line-height:10.15px;color:#606366">1</div>
<div class="code" style="left:140.1px;top:26.95px;height:10.15px;line-height:10.15px"><span class="c" style="text-decoration:underline solid #5a593c;text-decoration-thickness:0.5px;text-underline-offset:-0.2px">## (c) CHARLES J FENSKE 2021 ##</span></div>
<div class="ln" style="left:110px;width:9.8px;top:37.10px;height:10.15px;line-height:10.15px;color:#606366">2</div>
<div class="ln" style="left:110px;width:9.8px;top:47.25px;height:10.15px;line-height:10.15px;color:#606366">3</div>
<div class="code" style="left:140.1px;top:47.25px;height:10.15px;line-height:10.15px"><span class="k">import</span> math</div>
<div class="ln" style="left:110px;width:9.8px;top:57.40px;height:10.15px;line-height:10.15px;color:#606366">4</div>
<div class="ln" style="left:110px;width:9.8px;top:67.55px;height:10.15px;line-height:10.15px;color:#606366">5</div>
<div class="code" style="left:140.1px;top:67.55px;height:10.15px;line-height:10.15px"><span class="c"># Constants</span></div>
<div class="ln" style="left:110px;width:9.8px;top:77.70px;height:10.15px;line-height:10.15px;color:#606366">6</div>
<div class="code" style="left:140.1px;top:77.70px;height:10.15px;line-height:10.15px">rho_ox = <span class="n">1141</span>  <span class="c"># [kg/m^3]</span></div>
<div class="ln" style="left:110px;width:9.8px;top:87.85px;height:10.15px;line-height:10.15px;color:#606366">7</div>
<div class="code" style="left:140.1px;top:87.85px;height:10.15px;line-height:10.15px">rho_f = <span class="n">810</span>  <span class="c"># [kg/m^3]</span></div>
<div class="ln" style="left:110px;width:9.8px;top:98.00px;height:10.15px;line-height:10.15px;color:#606366">8</div>
<div class="code" style="left:140.1px;top:98.00px;height:10.15px;line-height:10.15px">rho_GN2 = <span class="n">1.225</span>  <span class="c"># [kg/m^3]</span></div>
<div class="ln" style="left:110px;width:9.8px;top:108.15px;height:10.15px;line-height:10.15px;color:#606366">9</div>
<div class="code" style="left:140.1px;top:108.15px;height:10.15px;line-height:10.15px">gamma_N2 = <span class="n">1.4</span>  <span class="c"># [J / kg-K]</span></div>
<div class="ln" style="left:110px;width:9.8px;top:118.30px;height:10.15px;line-height:10.15px;color:#606366">10</div>
<div class="ln" style="left:110px;width:9.8px;top:128.45px;height:10.15px;line-height:10.15px;color:#606366">11</div>
<div class="code" style="left:140.1px;top:128.45px;height:10.15px;line-height:10.15px"><span class="c"># Material Properties</span></div>
<div class="ln" style="left:110px;width:9.8px;top:138.60px;height:10.15px;line-height:10.15px;color:#606366">12</div>
<div class="code" style="left:140.1px;top:138.60px;height:10.15px;line-height:10.15px">S_y_SS316 = <span class="n">240</span> <span class="st">*</span> <span class="n">10</span> <span class="st">**</span> <span class="n">6</span>  <span class="c"># [Pa]</span></div>
<div class="ln" style="left:110px;width:9.8px;top:148.75px;height:10.15px;line-height:10.15px;color:#606366">13</div>
<div class="code" style="left:140.1px;top:148.75px;height:10.15px;line-height:10.15px">S_ult_SS316 = <span class="n">550</span> <span class="st">*</span> <span class="n">10</span> <span class="st">**</span> <span class="n">6</span>  <span class="c"># [Pa]</span></div>
<div class="ln" style="left:110px;width:9.8px;top:158.90px;height:10.15px;line-height:10.15px;color:#606366">14</div>
<div class="ln" style="left:110px;width:9.8px;top:169.05px;height:10.15px;line-height:10.15px;color:#606366">15</div>
<div class="code" style="left:140.1px;top:169.05px;height:10.15px;line-height:10.15px">S_y_A286 = <span class="n">883</span> <span class="st">*</span> <span class="n">10</span> <span class="st">**</span> <span class="n">6</span>  <span class="c"># [Pa]</span></div>
<div class="ln" style="left:110px;width:9.8px;top:179.20px;height:10.15px;line-height:10.15px;color:#606366">16</div>
<div class="code" style="left:140.1px;top:179.20px;height:10.15px;line-height:10.15px">S_ult_A286 = <span class="n">951</span> <span class="st">*</span> <span class="n">10</span> <span class="st">**</span> <span class="n">6</span>  <span class="c"># [Pa]</span></div>
<div class="ln" style="left:110px;width:9.8px;top:189.35px;height:10.15px;line-height:10.15px;color:#606366">17</div>
<div class="ln" style="left:110px;width:9.8px;top:199.50px;height:10.15px;line-height:10.15px;color:#606366">18</div>
<div class="code" style="left:140.1px;top:199.50px;height:10.15px;line-height:10.15px"><span class="c"># RPA Inputs</span></div>
<div class="ln" style="left:110px;width:9.8px;top:209.65px;height:10.15px;line-height:10.15px;color:#606366">19</div>
<div class="code" style="left:140.1px;top:209.65px;height:10.15px;line-height:10.15px">Pc = <span class="n">25</span> <span class="st">*</span> <span class="n">10</span> <span class="st">**</span> <span class="n">5</span>  <span class="c"># [Pa]</span></div>
<div class="ln" style="left:110px;width:9.8px;top:219.80px;height:10.15px;line-height:10.15px;color:#606366">20</div>
<div class="code" style="left:140.1px;top:219.80px;height:10.15px;line-height:10.15px">F = <span class="n">5000</span>  <span class="c"># [N]</span></div>
<div class="ln" style="left:110px;width:9.8px;top:229.95px;height:10.15px;line-height:10.15px;color:#606366">21</div>
<div class="code" style="left:140.1px;top:229.95px;height:10.15px;line-height:10.15px"><span style="text-decoration:underline #62a362">Lstar</span> = <span class="n">0.75</span>  <span class="c"># [m]</span></div>
<div class="ln" style="left:110px;width:9.8px;top:240.10px;height:10.15px;line-height:10.15px;color:#606366">22</div>
<div class="code" style="left:140.1px;top:240.10px;height:10.15px;line-height:10.15px">contraction_ratio_chamber = <span class="n">5.0</span>  <span class="c"># [Ae/At]</span></div>
<div class="ln" style="left:110px;width:9.8px;top:250.25px;height:10.15px;line-height:10.15px;color:#606366">23</div>
<div class="code" style="left:140.1px;top:250.25px;height:10.15px;line-height:10.15px">r = <span class="n">2.0</span>  <span class="c"># []</span></div>
<div class="ln" style="left:110px;width:9.8px;top:260.40px;height:10.15px;line-height:10.15px;color:#606366">24</div>
<div class="ln" style="left:110px;width:9.8px;top:270.55px;height:10.15px;line-height:10.15px;color:#606366">25</div>
<div class="code" style="left:140.1px;top:270.55px;height:10.15px;line-height:10.15px"><span class="c"># RPA Outputs</span></div>
<div class="ln" style="left:110px;width:9.8px;top:280.70px;height:10.15px;line-height:10.15px;color:#606366">26</div>
<div class="code" style="left:140.1px;top:280.70px;height:10.15px;line-height:10.15px">mdot = <span class="n">2.07683</span>  <span class="c"># [kg/s]</span></div>
<div class="ln" style="left:110px;width:9.8px;top:290.85px;height:10.15px;line-height:10.15px;color:#bdbdbd">27</div>
<div class="code" style="left:140.1px;top:290.85px;height:10.15px;line-height:10.15px">mdot_ox = <span class="n">1.38455</span>  <span class="c"># [kg/s]</span></div>
<div class="ln" style="left:110px;width:9.8px;top:301.00px;height:10.15px;line-height:10.15px;color:#606366">28</div>
<div class="code" style="left:140.1px;top:301.00px;height:10.15px;line-height:10.15px">mdot_f = <span class="n">0.69228</span>  <span class="c"># [kg/s]</span></div>
<div class="ln" style="left:110px;width:9.8px;top:311.15px;height:10.15px;line-height:10.15px;color:#606366">29</div>
<div class="code" style="left:140.1px;top:311.15px;height:10.15px;line-height:10.15px">Dc = <span class="n">96.07</span> <span class="st">*</span> <span class="n">10</span> <span class="st">**</span> <span class="n">3</span>  <span class="c"># [m]</span></div>
<div class="ln" style="left:110px;width:9.8px;top:321.30px;height:10.15px;line-height:10.15px;color:#606366">30</div>
<div class="code" style="left:140.1px;top:321.30px;height:10.15px;line-height:10.15px">Lc = <span class="n">179.97</span> <span class="st">*</span> <span class="n">10</span> <span class="st">**</span> <span class="n">3</span>  <span class="c"># [m]</span></div>
<div class="ln" style="left:110px;width:9.8px;top:331.45px;height:10.15px;line-height:10.15px;color:#606366">31</div>
<div class="code" style="left:140.1px;top:331.45px;height:10.15px;line-height:10.15px">Le = <span class="n">69.86</span> <span class="st">*</span> <span class="n">10</span> <span class="st">**</span> <span class="n">3</span>  <span class="c"># [m]</span></div>
<div class="ln" style="left:110px;width:9.8px;top:341.60px;height:10.15px;line-height:10.15px;color:#606366">32</div>
<div class="ln" style="left:110px;width:9.8px;top:351.75px;height:10.15px;line-height:10.15px;color:#606366">33</div>
<div class="code" style="left:140.1px;top:351.75px;height:10.15px;line-height:10.15px"><span class="c"># Feed System Inputs</span></div>
<div class="ln" style="left:110px;width:9.8px;top:361.90px;height:10.15px;line-height:10.15px;color:#606366">34</div>
<div class="code" style="left:140.1px;top:361.90px;height:10.15px;line-height:10.15px">ox_injector_stiffness = <span class="n">1.2</span>  <span class="c"># []</span></div>
<div class="ln" style="left:110px;width:9.8px;top:372.05px;height:10.15px;line-height:10.15px;color:#606366">35</div>
<div class="code" style="left:140.1px;top:372.05px;height:10.15px;line-height:10.15px">f_injector_stiffness = <span class="n">1.135</span>  <span class="c"># []</span></div>
<div class="ln" style="left:110px;width:9.8px;top:382.20px;height:10.15px;line-height:10.15px;color:#606366">36</div>
<div class="code" style="left:140.1px;top:382.20px;height:10.15px;line-height:10.15px">T_ox_tank = <span class="n">90</span>  <span class="c"># [K]</span></div>
<div class="ln" style="left:110px;width:9.8px;top:392.35px;height:10.15px;line-height:10.15px;color:#606366">37</div>
<div class="code" style="left:140.1px;top:392.35px;height:10.15px;line-height:10.15px">T_f_tank = <span class="n">288</span>  <span class="c"># [K]</span></div>
<div class="ln" style="left:110px;width:9.8px;top:402.50px;height:10.15px;line-height:10.15px;color:#606366">38</div>
<div class="code" style="left:140.1px;top:402.50px;height:10.15px;line-height:10.15px">T_assembly = <span class="n">288</span>  <span class="c"># [K]</span></div>
<div class="ln" style="left:110px;width:9.8px;top:412.65px;height:10.15px;line-height:10.15px;color:#606366">39</div>
<div class="ln" style="left:110px;width:9.8px;top:422.80px;height:10.15px;line-height:10.15px;color:#606366">40</div>
<div class="code" style="left:140.1px;top:422.80px;height:10.15px;line-height:10.15px"><span class="c"># Other Geometry</span></div>
<div class="ln" style="left:110px;width:9.8px;top:432.95px;height:10.15px;line-height:10.15px;color:#606366">41</div>
<div class="code" style="left:140.1px;top:432.95px;height:10.15px;line-height:10.15px">main_ox_line_area = (<span class="n">0.0254</span> <span class="st">*</span> <span class="n">0.406</span>) <span class="st">**</span> <span class="n">2</span> / <span class="n">4</span> <span class="st">*</span> math.pi  <span class="c"># [m^2]</span></div>
<div class="ln" style="left:110px;width:9.8px;top:443.10px;height:10.15px;line-height:10.15px;color:#606366">42</div>
<div class="code" style="left:140.1px;top:443.10px;height:10.15px;line-height:10.15px">main_fuel_line_area = (<span class="n">0.0254</span> <span class="st">*</span> <span class="n">0.406</span>) <span class="st">**</span> <span class="n">2</span> / <span class="n">4</span> <span class="st">*</span> math.pi  <span class="c"># [m^2]</span></div>
<div class="ln" style="left:110px;width:9.8px;top:453.25px;height:10.15px;line-height:10.15px;color:#606366">43</div>
<div class="a" style="left:187.9px;top:292.35px;width:0.8px;height:7px;background:#bbbbbb"></div>
<svg class="ic" style="left:783.8px;top:28.8px" width="6" height="6" viewBox="0 0 12 12"><path d="M1.2 4.8l3 3 6.5-6.5" stroke="#3fb04f" stroke-width="2.4" fill="none"/><path d="M1 10.5h10" stroke="#3a7a45" stroke-width="1.2" opacity="0.8"/></svg>
<div class="t" style="left:790.8px;top:29px;font-size:5.6px;font-weight:bold;color:#b8b8b8">2</div>
<svg class="ic" style="left:799px;top:30px" width="4.6" height="3" viewBox="0 0 6 4"><path d="M0.6 3.4L3 1 5.4 3.4" stroke="#b8b8b8" stroke-width="1.2" fill="none"/></svg>
<svg class="ic" style="left:808.6px;top:30.2px" width="4.6" height="3" viewBox="0 0 6 4"><path d="M0.6 0.6L3 3 5.4 0.6" stroke="#b8b8b8" stroke-width="1.2" fill="none"/></svg>
<div class="a" style="left:811.4px;top:38px;width:3.4px;height:443px;background:#4a4c4e;border-radius:1.7px"></div>
<div class="a" style="left:809.8px;top:37px;width:6.5px;height:1.8px;background:#857a58"></div>
<div class="a" style="left:0;top:497px;width:826px;height:10px;background:#3c3f41;border-top:0.8px solid #2f3133"></div>
<svg class="ic" style="left:14.5px;top:500.3px" width="5" height="5" viewBox="0 0 10 10"><path d="M0 1h2M0 5h2M0 9h2M4 1h6M4 5h6M4 9h6" stroke="#afb1b3" stroke-width="1.6"/></svg>
<div class="t" style="left:22px;top:500.1px;font-size:5.2px;color:#bbbbbb">TODO</div>
<svg class="ic" style="left:45.5px;top:500.1px" width="5.5" height="5.5" viewBox="0 0 11 11"><circle cx="5.5" cy="5.5" r="5.5" fill="#afb1b3"/><path d="M5.5 2v4.5M5.5 8v1.3" stroke="#3c3f41" stroke-width="1.5"/></svg>
<div class="t" style="left:53px;top:500.1px;font-size:5.2px;color:#bbbbbb">Problems</div>
<svg class="ic" style="left:85px;top:500.3px" width="5.5" height="5" viewBox="0 0 11 10"><rect x="0" y="0" width="11" height="10" fill="#afb1b3"/><path d="M2 3l2 1.5L2 6M5 7h3" stroke="#3c3f41" stroke-width="1"/></svg>
<div class="t" style="left:93px;top:500.1px;font-size:5.2px;color:#bbbbbb">Terminal</div>
<svg class="ic" style="left:123.5px;top:500.1px" width="5.5" height="6" viewBox="0 0 11 12"><path d="M5.5 0L11 3v6l-5.5 3L0 9V3z" fill="#afb1b3"/><path d="M0 3l5.5 3 5.5-3M5.5 6v6" stroke="#3c3f41" stroke-width="0.9" fill="none"/></svg>
<div class="t" style="left:131px;top:500.1px;font-size:5.2px;color:#bbbbbb">Python Packages</div>
<svg class="ic" style="left:182.5px;top:500.1px" width="6" height="6" viewBox="0 0 12 12"><path d="M6 0l6 6-6 6-6-6z" fill="#afb1b3"/><path d="M6 3l3 3-3 3-3-3z" fill="#3c3f41"/></svg>
<div class="t" style="left:190px;top:500.1px;font-size:5.2px;color:#bbbbbb">Python Console</div>
<svg class="ic" style="left:781.5px;top:500.1px" width="6" height="6" viewBox="0 0 12 12"><path d="M6 1a5 5 0 1 0 0 10h5V6a5 5 0 0 0-5-5z" fill="none" stroke="#afb1b3" stroke-width="1.3"/></svg>
<div class="t" style="left:789px;top:500.1px;font-size:5.2px;color:#bbbbbb">Event Log</div>
<div class="a" style="left:0;top:506.2px;width:826px;height:9.8px;background:#3c3f41;border-top:1px solid #46494b"></div>
<svg class="ic" style="left:4px;top:508.5px" width="6" height="6" viewBox="0 0 12 12"><path d="M2 1h9v7H5l-3 3z" fill="none" stroke="#afb1b3" stroke-width="1.2"/></svg>
<div class="t" style="left:14.3px;top:509.1px;font-size:5.16px;color:#bbbbbb">PyCharm 2021.2.4 available // Update... (13 minutes ago)</div>
<div class="t" style="left:727px;top:509.1px;font-size:5.2px;color:#bbbbbb">27:14</div>
<div class="t" style="left:746px;top:509.1px;font-size:5.2px;color:#bbbbbb">LF</div>
<div class="t" style="left:756px;top:509.1px;font-size:5.2px;color:#bbbbbb">UTF-8</div>
<div class="t" style="left:777px;top:509.1px;font-size:5.2px;color:#bbbbbb">4 spaces</div>
<svg class="ic" style="left:804px;top:508.8px" width="5.5" height="6" viewBox="0 0 11 12"><rect x="0" y="5" width="8" height="7" fill="#afb1b3"/><path d="M2 5V3a3 3 0 0 1 6 0" stroke="#afb1b3" stroke-width="1.3" fill="none"/></svg>
<svg class="ic" style="left:814px;top:508.5px" width="7" height="6.5" viewBox="0 0 14 13"><path d="M2 10a3 3 0 0 1 1-6 4 4 0 0 1 7.5 1A2.5 2.5 0 0 1 11 10z" fill="#afb1b3"/><circle cx="11" cy="10" r="2.5" fill="#afb1b3" stroke="#3c3f41"/></svg>
</body></html>
